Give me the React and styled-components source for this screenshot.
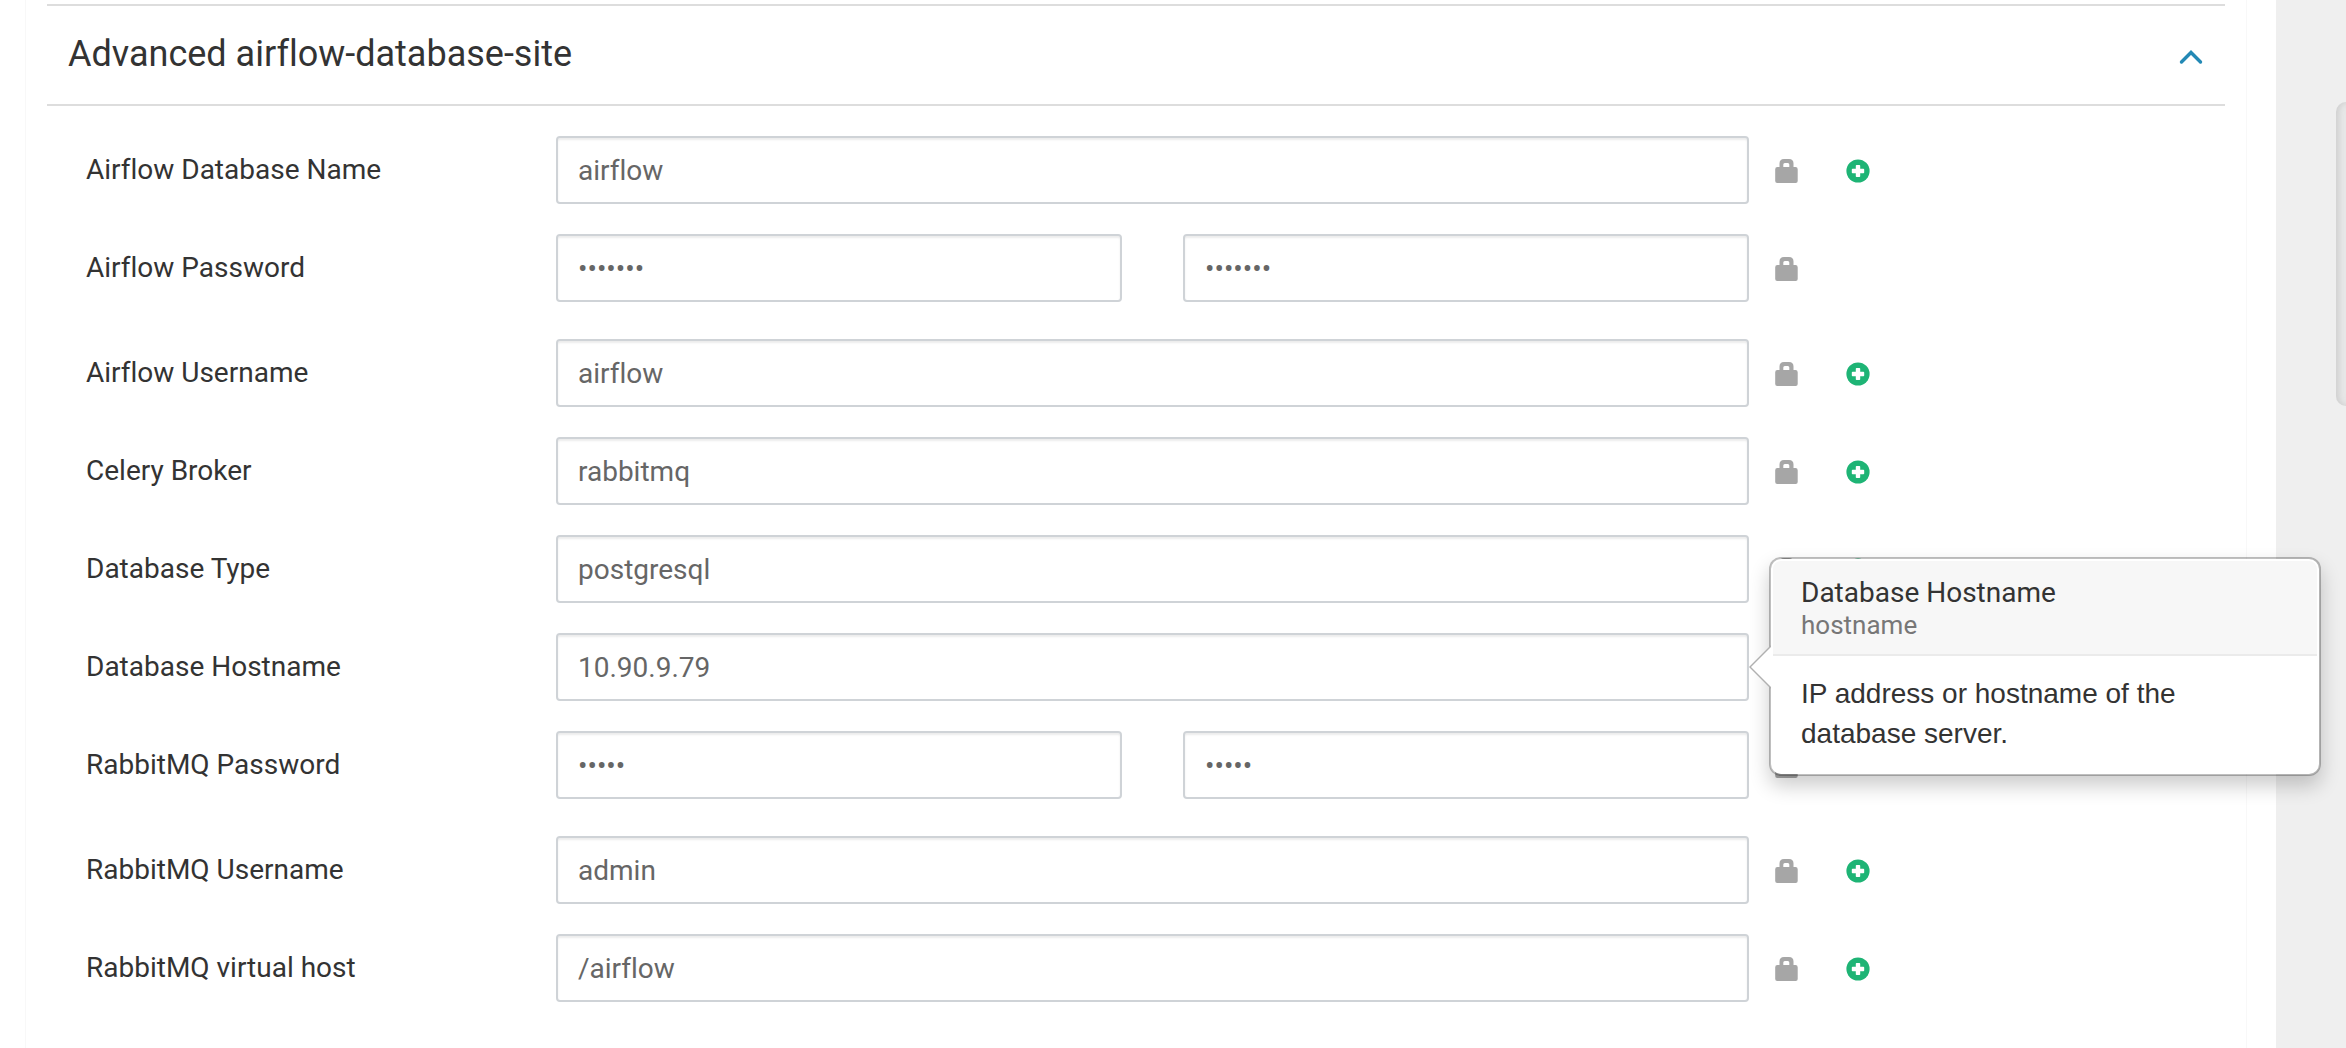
import React, { useState } from 'react';
import styled, { createGlobalStyle } from 'styled-components';

const GlobalStyle = createGlobalStyle`
  *, *::before, *::after {
    box-sizing: border-box;
  }

  body {
    margin: 0;
    background: #efefef;
    color: #333;
    font-family: Roboto, "Liberation Sans", sans-serif;
    font-size: 28px;
    font-variant-ligatures: none;
    line-height: 40px;
  }
`;

const Page = styled.div`
  display: flex;
  min-height: 100vh;
`;

const Content = styled.main`
  display: flex;
  flex: 1;
  min-width: 0;
  padding: 0 29px 0 25px;
  background: #fff;
`;

const Panel = styled.div`
  flex: 1;
  min-width: 0;
  padding: 4px 21px 0;
  border: solid #f8f8f8;
  border-width: 0 1px;
`;

const Gutter = styled.aside`
  display: flex;
  justify-content: flex-end;
  align-items: flex-start;
  width: 70px;
  padding-top: 102px;
`;

const GutterHandle = styled.div`
  width: 10px;
  height: 304px;
  border-radius: 10px 0 0 10px;
  background: #e8e8e8;
  box-shadow: inset 4px 0 6px -1px #cfcfcf;
`;

const SectionHeader = styled.header`
  display: flex;
  align-items: center;
  justify-content: space-between;
  height: 102px;
  padding: 0 21px 2px;
  border: solid #ddd;
  border-width: 2px 0;
`;

const SectionTitle = styled.h3`
  margin: 0;
  font-size: 36px;
  font-weight: 400;
`;

const IconButton = styled.button`
  display: flex;
  padding: 0;
  border: 0;
  background: none;
  color: ${({ $color }) => $color};
  cursor: pointer;
`;

const Form = styled.form`
  padding: 30px 0 0 39px;
`;

const Row = styled.div`
  display: grid;
  grid-template-columns: 470px minmax(0, 1fr) 476px;
  align-items: center;
  margin-bottom: ${({ $secret }) => ($secret ? 37 : 30)}px;
`;

const Label = styled.label`
  justify-self: start;
`;

const Controls = styled.div`
  position: relative;
  display: flex;
  gap: 61px;
`;

const Input = styled.input`
  flex: 1;
  min-width: 0;
  height: 68px;
  padding: 0 20px;
  border: 2px solid #cfd3d7;
  border-radius: 4px;
  background: #fff;
  box-shadow: inset 0 2px 2px rgba(0, 0, 0, 0.075);
  color: #666;
  font: inherit;
  font-variant-ligatures: none;
  outline: 0;
`;

const Actions = styled.div`
  display: flex;
  gap: 48px;
  padding: 2px 0 0 26px;
`;

const Popover = styled.div`
  position: absolute;
  top: -76px;
  left: calc(100% + 20px);
  z-index: 1;
  width: 552px;
  padding: 2px;
  border: 2px solid rgba(0, 0, 0, 0.25);
  border-radius: 12px;
  background: #fff;
  background-clip: padding-box;
  box-shadow: 0 10px 20px rgba(0, 0, 0, 0.2);

  &::before,
  &::after {
    position: absolute;
    top: 86px;
    border: solid transparent;
    border-width: 22px 22px 22px 0;
    content: "";
  }

  &::before {
    right: 100%;
    border-right-color: #b0b0b0;
  }

  &::after {
    right: calc(100% - 2px);
    border-right-color: #fff;
  }
`;

const PopoverTitle = styled.div`
  padding: 16px 28px 13px;
  border-bottom: 2px solid #ebebeb;
  border-radius: 8px 8px 0 0;
  background: #f7f7f7;
  line-height: 32px;
`;

const PropertyName = styled.div`
  color: #777;
  font-size: 26px;
`;

const PopoverBody = styled.div`
  padding: 18px 28px;
  font-family: "Liberation Sans", Arial, sans-serif;
`;

const Chevron = ({ open }) => (
  <svg width="26" height="24" viewBox="0 0 26 24" fill="none" stroke="currentColor" strokeWidth="3.400" aria-hidden="true">
    <path d={open ? 'M3.500 20 13 10.500 22.500 20' : 'M3.500 10.500 13 20 22.500 10.500'} strokeLinecap="round" />
  </svg>
);

const LockIcon = () => (
  <svg width="23" height="24" viewBox="0 0 23 24" fill="currentColor" aria-hidden="true">
    <path
      fillRule="evenodd"
      d="M4.500 8V4.500Q4.500 0 9 0H14Q18.500 0 18.500 4.500V8H20.500Q22.700 8 22.700 10.200V22Q22.700 24 20.700 24H2.200Q.2 24 .2 22V10.200Q.2 8 2.400 8ZM8.300 8H14.300V5.500Q14.300 4 12.800 4H9.800Q8.300 4 8.300 5.500Z"
    />
  </svg>
);

const PlusIcon = () => (
  <svg width="24" height="24" viewBox="0 0 24 24" aria-hidden="true">
    <circle cx="12" cy="12" r="11.600" fill="currentColor" />
    <path
      d="M9.800 6.800Q9.800 6 10.600 6H13.400Q14.200 6 14.200 6.800V9.800H17.400Q18.200 9.800 18.200 10.600V13.400Q18.200 14.200 17.400 14.200H14.200V17.200Q14.200 18 13.400 18H10.600Q9.800 18 9.800 17.200V14.200H6.600Q5.800 14.200 5.800 13.400V10.600Q5.800 9.800 6.600 9.800H9.800Z"
      fill="#fff"
    />
  </svg>
);

const PROPERTIES = [
  { name: 'database_name', label: 'Airflow Database Name', value: 'airflow' },
  { name: 'password', label: 'Airflow Password', value: 'airflow', secret: true },
  { name: 'username', label: 'Airflow Username', value: 'airflow' },
  { name: 'celery_broker', label: 'Celery Broker', value: 'rabbitmq' },
  { name: 'database_type', label: 'Database Type', value: 'postgresql' },
  {
    name: 'hostname',
    label: 'Database Hostname',
    value: '10.90.9.79',
    description: 'IP address or hostname of the database server.',
  },
  { name: 'rabbitmq_password', label: 'RabbitMQ Password', value: 'admin', secret: true },
  { name: 'rabbitmq_username', label: 'RabbitMQ Username', value: 'admin' },
  { name: 'rabbitmq_vhost', label: 'RabbitMQ virtual host', value: '/airflow' },
];

const PropertyRow = ({ property }) => {
  const { name, label, value, secret, description } = property;
  const type = secret ? 'password' : 'text';

  return (
    <Row $secret={secret}>
      <Label htmlFor={name}>{label}</Label>
      <Controls>
        <Input id={name} type={type} defaultValue={value} autoComplete="off" />
        {secret && (
          <Input type={type} defaultValue={value} autoComplete="off" aria-label={`Retype ${label}`} />
        )}
        {description && (
          <Popover role="tooltip">
            <PopoverTitle>
              {label}
              <PropertyName>{name}</PropertyName>
            </PopoverTitle>
            <PopoverBody>{description}</PopoverBody>
          </Popover>
        )}
      </Controls>
      <Actions>
        <IconButton type="button" $color="#a6a6a6" aria-label={`Lock ${label}`}>
          <LockIcon />
        </IconButton>
        {!secret && (
          <IconButton type="button" $color="#1eb475" aria-label={`Override ${label}`}>
            <PlusIcon />
          </IconButton>
        )}
      </Actions>
    </Row>
  );
};

const App = () => {
  const [open, setOpen] = useState(true);

  return (
    <Page>
      <GlobalStyle />
      <Content>
        <Panel>
          <SectionHeader>
            <SectionTitle>Advanced airflow-database-site</SectionTitle>
            <IconButton
              type="button"
              $color="#2389b5"
              aria-label="Toggle section"
              aria-expanded={open}
              onClick={() => setOpen(!open)}
            >
              <Chevron open={open} />
            </IconButton>
          </SectionHeader>
          {open && (
            <Form>
              {PROPERTIES.map((property) => <PropertyRow key={property.name} property={property} />)}
            </Form>
          )}
        </Panel>
      </Content>
      <Gutter>
        <GutterHandle />
      </Gutter>
    </Page>
  );
};

export default App;
